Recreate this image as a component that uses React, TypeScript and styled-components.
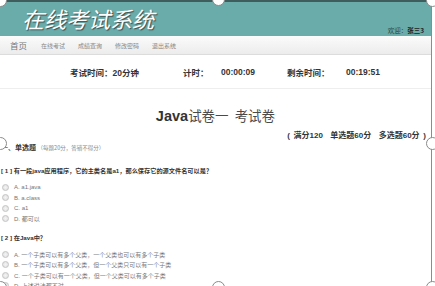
import React from "react";
import styled, { createGlobalStyle } from "styled-components";

const GlobalStyle = createGlobalStyle`
  html, body {
    margin: 0;
    padding: 0;
    background: #fff;
    overflow: hidden;
  }
  body {
    font-family: "Liberation Sans", "Noto Sans CJK SC", sans-serif;
  }
`;

const Frame = styled.div`
  position: relative;
  width: 435px;
  height: 286px;
  overflow: hidden;
  background: #fff;
`;

const Page = styled.div`
  width: 432px;
  height: 286px;
  border-right: 1px solid #8c8c8c;
  box-sizing: border-box;
  overflow: hidden;
`;

const Header = styled.header`
  height: 36px;
  box-sizing: border-box;
  background: #6aacaa;
  border-top: 2px solid #3e5d5c;
  display: flex;
  justify-content: space-between;
  align-items: flex-end;
  padding: 0 7px 2px 22px;
`;

const Logo = styled.h1`
  margin: 0 0 2px;
  font-family: "Noto Sans CJK SC", sans-serif;
  font-style: italic;
  font-weight: 400;
  font-size: 22px;
  line-height: 28px;
  color: #fff;
  text-shadow: 1px 1px 1px #3a4f4f;
`;

const Welcome = styled.div`
  font-family: "Noto Sans CJK SC", sans-serif;
  font-size: 6.5px;
  line-height: 8px;
  color: #2f4a49;

  b {
    font-weight: 700;
    color: #222;
  }
`;

const Nav = styled.nav`
  height: 19px;
  box-sizing: border-box;
  background: linear-gradient(#fbfbfb, #ececec);
  border-bottom: 1px solid #dcdcdc;
  display: flex;
  align-items: center;
  padding-left: 10px;
`;

const NavItem = styled.span<{ $home?: boolean }>`
  font-family: "Noto Sans CJK SC", sans-serif;
  font-size: ${(p) => (p.$home ? "8.5px" : "6px")};
  color: ${(p) => (p.$home ? "#777" : "#888")};
  margin-right: ${(p) => (p.$home ? "14px" : "13px")};
`;

const TimerBar = styled.div`
  height: 34px;
  box-sizing: border-box;
  border-bottom: 1px solid #eeeeee;
  display: grid;
  grid-template-columns: 113px 38px 66px 59px auto;
  align-items: center;
  padding-left: 70px;
  font-family: "Liberation Sans", "Noto Sans CJK SC", sans-serif;
  font-size: 8.5px;
  font-weight: 700;
  color: #333;
`;

const Paper = styled.main`
  padding-top: 16px;
`;

const PaperTitle = styled.h2`
  margin: 0;
  text-align: center;
  font-size: 13.5px;
  line-height: 20px;
  font-weight: 400;
  color: #4a4a4a;
  font-family: "Noto Sans CJK SC", serif;

  b {
    font-family: "Liberation Sans", sans-serif;
    font-size: 14.5px;
    font-weight: 700;
    color: #333;
  }

  span {
    margin-left: 6px;
  }
`;

const Score = styled.div`
  margin-top: 5px;
  padding-right: 5px;
  text-align: right;
  font-family: "Liberation Sans", "Noto Sans CJK SC", sans-serif;
  font-size: 8px;
  line-height: 10px;
  font-weight: 700;
  color: #333;
  word-spacing: 1.5px;
`;

const Section = styled.div`
  margin-top: 1px;
  padding-left: 1px;
  font-family: "Noto Sans CJK SC", sans-serif;
  font-size: 7px;
  line-height: 10px;
  color: #333;

  b {
    font-weight: 700;
  }

  small {
    font-size: 5.5px;
    color: #888;
  }
`;

const Question = styled.div<{ $gap: number }>`
  margin-top: ${(p) => p.$gap}px;
`;

const Stem = styled.div`
  padding-left: 1px;
  font-family: "Liberation Sans", "Noto Sans CJK SC", sans-serif;
  font-size: 6.2px;
  line-height: 10px;
  font-weight: 700;
  color: #333;
  margin-bottom: 6px;
`;

const Option = styled.label`
  display: flex;
  align-items: center;
  gap: 5px;
  height: 10.5px;
  padding-left: 2px;
  font-family: "Liberation Sans", "Noto Sans CJK SC", sans-serif;
  font-size: 6px;
  color: #777;
`;

const Radio = styled.span`
  width: 5px;
  height: 5px;
  border-radius: 50%;
  border: 0.5px solid #c4c4c4;
  background: radial-gradient(#f4f4f4, #dedede);
  flex: none;
`;

const Handle = styled.span<{ $x: number; $y: number }>`
  position: absolute;
  left: ${(p) => p.$x - 6}px;
  top: ${(p) => p.$y - 6}px;
  width: 11px;
  height: 11px;
  border-radius: 50%;
  background: #fff;
  border: 1px solid #8a8a8a;
`;

const questions = [
  {
    no: 1,
    stem: "有一段java应用程序，它的主类名是a1，那么保存它的源文件名可以是？",
    options: ["A. a1.java", "B. a.class", "C. a1", "D. 都可以"],
    gap: 13,
  },
  {
    no: 2,
    stem: "在Java中？",
    options: [
      "A. 一个子类可以有多个父类，一个父类也可以有多个子类",
      "B. 一个子类可以有多个父类，但一个父类只可以有一个子类",
      "C. 一个子类可以有一个父类，但一个父类可以有多个子类",
      "D. 上述说法都不对",
    ],
    gap: 9,
  },
];

const handles = [
  [0, 0],
  [218, -1],
  [432, 0],
  [0, 143],
  [432, 143],
  [0, 287],
  [218, 287],
  [432, 287],
];

export default function App() {
  return (
    <>
      <GlobalStyle />
      <Frame>
        <Page>
          <Header>
            <Logo>在线考试系统</Logo>
            <Welcome>
              欢迎：<b>张三3</b>
            </Welcome>
          </Header>
          <Nav>
            <NavItem $home>首页</NavItem>
            <NavItem>在线考试</NavItem>
            <NavItem>成绩查询</NavItem>
            <NavItem>修改密码</NavItem>
            <NavItem>退出系统</NavItem>
          </Nav>
          <TimerBar>
            <span>考试时间：20分钟</span>
            <span>计时：</span>
            <span>00:00:09</span>
            <span>剩余时间：</span>
            <span>00:19:51</span>
          </TimerBar>
          <Paper>
            <PaperTitle>
              <b>Java</b>试卷一<span>考试卷</span>
            </PaperTitle>
            <Score>( 满分120&nbsp; 单选题60分&nbsp; 多选题60分 )</Score>
            <Section>
              一、<b>单选题</b> <small>（每题20分，答错不得分）</small>
            </Section>
            {questions.map((q) => (
              <Question key={q.no} $gap={q.gap}>
                <Stem>
                  [ {q.no} ] {q.stem}
                </Stem>
                {q.options.map((o) => (
                  <Option key={o}>
                    <Radio />
                    {o}
                  </Option>
                ))}
              </Question>
            ))}
          </Paper>
        </Page>
        {handles.map(([x, y], i) => (
          <Handle key={i} $x={x} $y={y} />
        ))}
      </Frame>
    </>
  );
}
